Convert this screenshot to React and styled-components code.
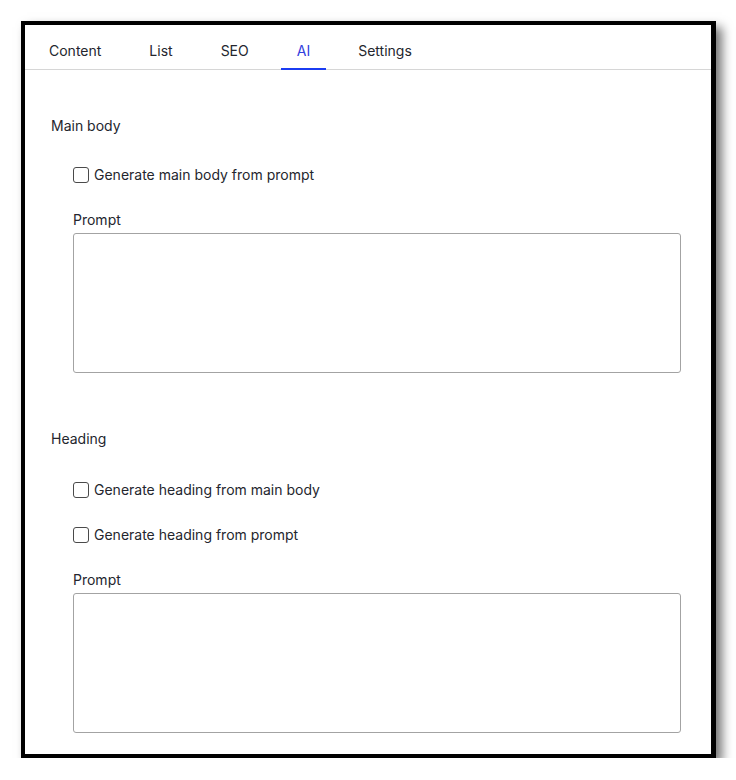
import styled, { createGlobalStyle } from "styled-components";

const GlobalStyle = createGlobalStyle`
  body {
    margin: 0;
    background: #ffffff;
    font-family: Inter, "Noto Sans", sans-serif;
    font-size: 14px;
    color: #24262e;
  }
`;

const Page = styled.div`
  padding: 21px 0 0 21px;
`;

const Frame = styled.div`
  width: 686px;
  background: #ffffff;
  border: 4px solid #000000;
  border-right-width: 5px;
  box-shadow: 6px 6px 10px rgba(0, 0, 0, 0.55);
`;

const TabBar = styled.div`
  display: flex;
  gap: 16px;
  height: 44px;
  padding-left: 8px;
  border-bottom: 1px solid #d6d6d6;
`;

const Tab = styled.div`
  display: flex;
  align-items: center;
  padding: 8px 16px 0;
  margin-bottom: -1px;
  line-height: 20px;
  color: ${(p) => (p.$active ? "#3340dd" : "#24262e")};
  border-bottom: 2px solid ${(p) => (p.$active ? "#1b3cf2" : "transparent")};
`;

const Body = styled.div`
  padding: 46px 30px 21px 26px;
`;

const Section = styled.section`
  & + & {
    margin-top: 56px;
  }
`;

const SectionTitle = styled.div`
  line-height: 20px;
  margin-bottom: ${(p) => p.$gap || 30}px;
`;

const Fields = styled.div`
  padding-left: 22px;
  display: flex;
  flex-direction: column;
  gap: 25px;
`;

const CheckRow = styled.label`
  display: flex;
  align-items: center;
  gap: 5px;
  line-height: 20px;
`;

const Box = styled.span`
  width: 14px;
  height: 14px;
  border: 1px solid #4a4a4a;
  border-radius: 3px;
  background: #fff;
  flex-shrink: 0;
`;

const Field = styled.div`
  display: flex;
  flex-direction: column;
  gap: 3px;
`;

const FieldLabel = styled.div`
  line-height: 20px;
`;

const TextArea = styled.textarea`
  box-sizing: border-box;
  width: 608px;
  height: 140px;
  border: 1px solid #a3a3a3;
  border-radius: 3px;
  resize: none;
  font: inherit;
  margin: 0;
  display: block;
`;

const tabs = ["Content", "List", "SEO", "AI", "Settings"];

function Check({ children }) {
  return (
    <CheckRow>
      <Box />
      <span>{children}</span>
    </CheckRow>
  );
}

export default function App() {
  return (
    <Page>
      <GlobalStyle />
      <Frame>
        <TabBar>
          {tabs.map((t) => (
            <Tab key={t} $active={t === "AI"}>
              {t}
            </Tab>
          ))}
        </TabBar>
        <Body>
          <Section>
            <SectionTitle $gap={29}>Main body</SectionTitle>
            <Fields>
              <Check>Generate main body from prompt</Check>
              <Field>
                <FieldLabel>Prompt</FieldLabel>
                <TextArea />
              </Field>
            </Fields>
          </Section>
          <Section>
            <SectionTitle $gap={31}>Heading</SectionTitle>
            <Fields>
              <Check>Generate heading from main body</Check>
              <Check>Generate heading from prompt</Check>
              <Field>
                <FieldLabel>Prompt</FieldLabel>
                <TextArea />
              </Field>
            </Fields>
          </Section>
        </Body>
      </Frame>
    </Page>
  );
}
